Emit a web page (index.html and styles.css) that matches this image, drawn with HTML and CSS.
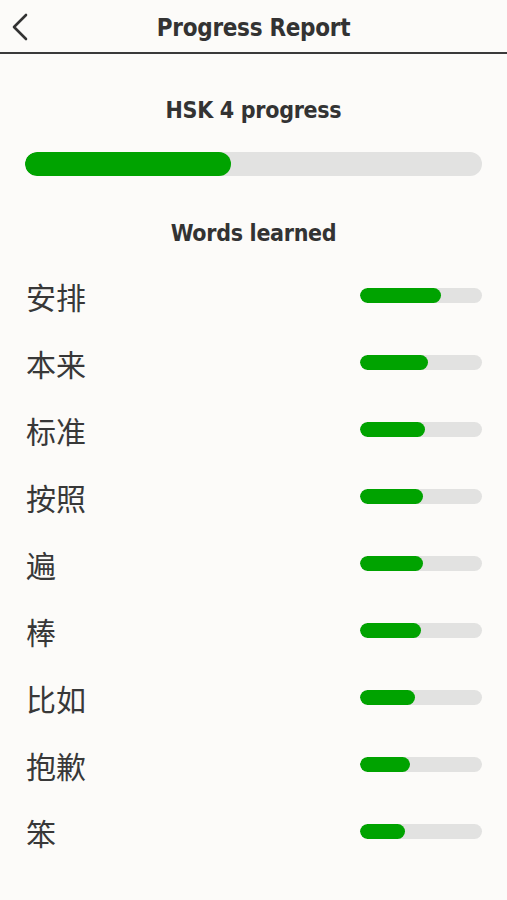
FILE: index.html
```html
<!DOCTYPE html>
<html lang="zh">
<head>
<meta charset="utf-8">
<title>Progress Report</title>
<link rel="stylesheet" href="styles.css">
</head>
<body>
<header class="topbar">
  <button class="back" aria-label="Back">
    <svg width="18" height="28" viewBox="0 0 18 28"><path d="M15 2 L3 14 L15 26" fill="none" stroke="#333" stroke-width="2.6" stroke-linecap="round" stroke-linejoin="round"/></svg>
  </button>
  <h1 class="title">Progress Report</h1>
</header>
<main class="content">
  <h2 class="section-title">HSK 4 progress</h2>
  <div class="bar bar-lg"><div class="fill" style="width:45.1%"></div></div>
  <h2 class="section-title words-title">Words learned</h2>
  <ul class="words">
    <li class="word"><span class="hanzi">安排</span><div class="bar bar-sm"><div class="fill" style="width:66%"></div></div></li>
    <li class="word"><span class="hanzi">本来</span><div class="bar bar-sm"><div class="fill" style="width:56%"></div></div></li>
    <li class="word"><span class="hanzi">标准</span><div class="bar bar-sm"><div class="fill" style="width:53%"></div></div></li>
    <li class="word"><span class="hanzi">按照</span><div class="bar bar-sm"><div class="fill" style="width:52%"></div></div></li>
    <li class="word"><span class="hanzi">遍</span><div class="bar bar-sm"><div class="fill" style="width:52%"></div></div></li>
    <li class="word"><span class="hanzi">棒</span><div class="bar bar-sm"><div class="fill" style="width:50%"></div></div></li>
    <li class="word"><span class="hanzi">比如</span><div class="bar bar-sm"><div class="fill" style="width:45%"></div></div></li>
    <li class="word"><span class="hanzi">抱歉</span><div class="bar bar-sm"><div class="fill" style="width:41%"></div></div></li>
    <li class="word"><span class="hanzi">笨</span><div class="bar bar-sm"><div class="fill" style="width:37%"></div></div></li>
  </ul>
</main>
</body>
</html>
```
FILE: styles.css
```css
* { box-sizing: border-box; }
html, body {
  margin: 0;
  padding: 0;
  background: #fcfbf9;
  color: #333;
}
body {
  width: 507px;
  height: 900px;
  overflow: hidden;
  font-family: "DejaVu Sans Condensed", "DejaVu Sans", sans-serif;
}
.topbar {
  position: relative;
  height: 54px;
  padding-top: 3px;
  border-bottom: 2px solid #3a3a3a;
  display: flex;
  align-items: center;
  justify-content: center;
}
.back {
  position: absolute;
  left: 10px;
  top: 13px;
  border: 0;
  background: none;
  padding: 0;
  width: 20px;
  height: 28px;
}
.title {
  margin: 0;
  font-size: 24px;
  font-weight: bold;
  letter-spacing: -0.3px;
  color: #333;
}
.content {
  padding: 0 25px;
}
.section-title {
  margin: 0;
  text-align: center;
  font-size: 23px;
  font-weight: bold;
  letter-spacing: -0.3px;
  color: #333;
  line-height: 30px;
  padding-top: 41px;
}
.bar {
  background: #e2e2e1;
  border-radius: 999px;
  overflow: hidden;
}
.fill {
  height: 100%;
  background: #00a300;
  border-radius: 999px;
}
.bar-lg {
  height: 24px;
  margin-top: 27px;
}
.words-title {
  padding-top: 42px;
}
.words {
  list-style: none;
  margin: 0;
  padding: 14px 0 0;
}
.word {
  display: flex;
  align-items: center;
  justify-content: space-between;
  height: 67px;
  padding-left: 1px;
}
.hanzi {
  font-family: "Noto Sans CJK SC", sans-serif;
  font-size: 30px;
  color: #383838;
}
.bar-sm {
  width: 122px;
  height: 15px;
}
```
